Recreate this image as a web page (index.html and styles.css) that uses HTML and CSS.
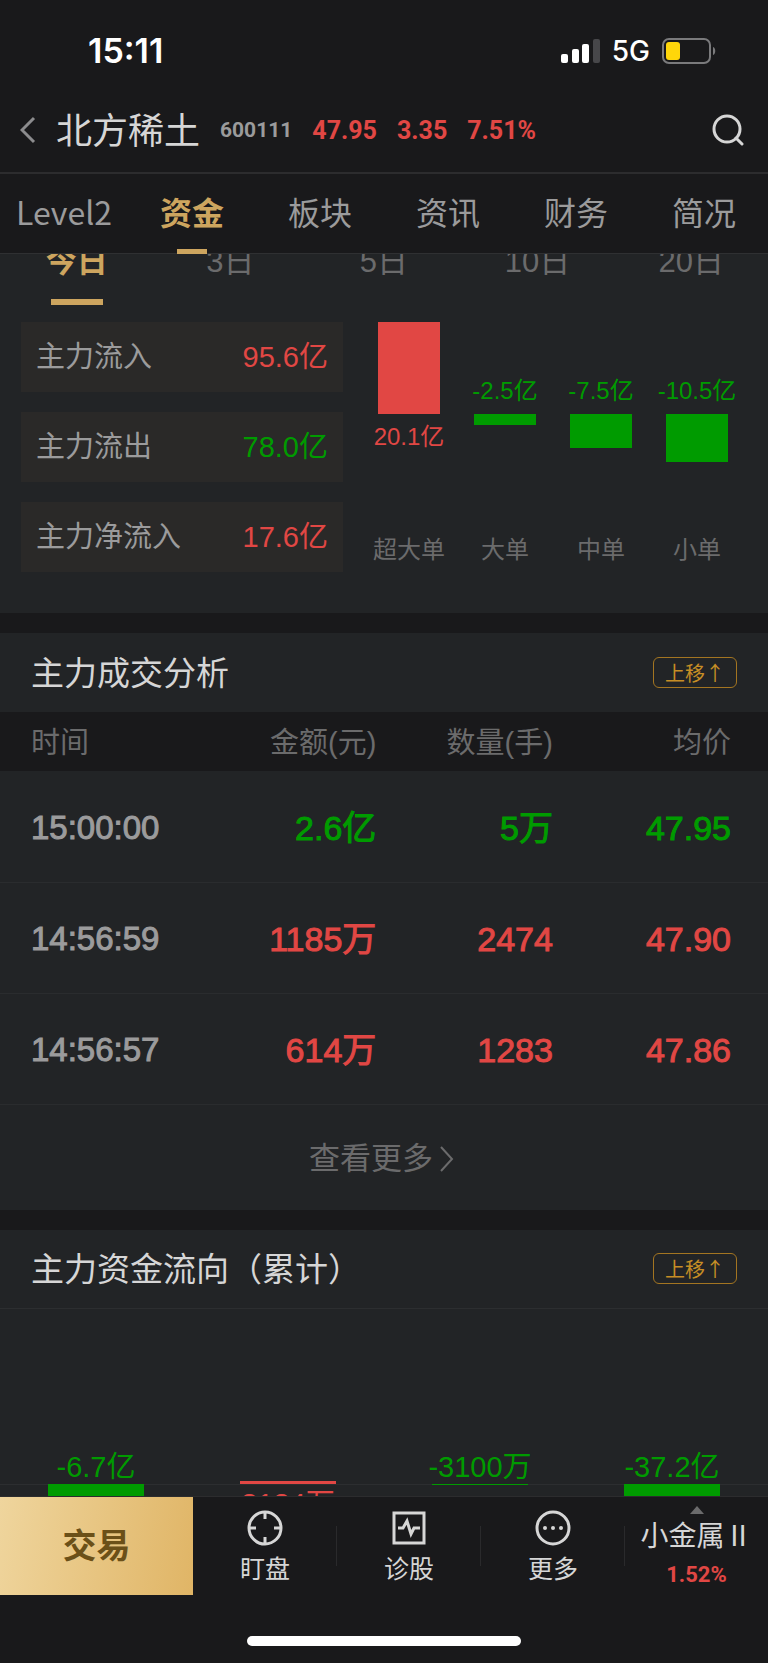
FILE: index.html
```
<!DOCTYPE html>
<html lang="zh-CN">
<head>
	<meta charset="UTF-8">
	<meta name="viewport" content="width=device-width, initial-scale=1">

	<title>北方稀土 600111</title>

	<link rel="stylesheet" href="styles.css">
</head>
<body>

	<div class="statusbar">
		<span class="clock">15:11</span>
		<div class="signal">
			<svg width="39" height="24" viewBox="0 0 39 24">
				<g fill="#fff">
					<rect x="0" y="15" width="7" height="9" rx="2"/>
					<rect x="11" y="10" width="7" height="14" rx="2"/>
					<rect x="21" y="5" width="7" height="19" rx="2"/>
				</g>
				<rect x="32" y="0" width="7" height="24" rx="2" fill="#47474a"/>
			</svg>
			<span class="network">5G</span>
			<svg width="54" height="26" viewBox="0 0 54 26">
				<rect x="1" y="1" width="47" height="24" rx="6" fill="none" stroke="#7a7a7c" stroke-width="2"/>
				<rect x="4" y="4" width="14" height="18" rx="3" fill="#ffd60a"/>
				<path d="M51 9c3 1 3 7 0 8z" fill="#7a7a7c"/>
			</svg>
		</div>
	</div>

	<header class="header">
		<button class="iconbutton" aria-label="返回">
			<svg width="16" height="28" viewBox="0 0 16 28">
				<path d="M14 2L2 14l12 12" fill="none" stroke="#8c8c8e" stroke-width="3"/>
			</svg>
		</button>
		<h1>北方稀土</h1>
		<span class="code">600111</span>
		<div class="quote red">
			<span>47.95</span>
			<span>3.35</span>
			<span>7.51%</span>
		</div>
		<button class="iconbutton search" aria-label="搜索">
			<svg width="32" height="32" viewBox="0 0 32 32">
				<g fill="none" stroke="#d6d6d6" stroke-width="3">
					<circle cx="15" cy="15" r="13"/>
					<path d="M24 24l6 6" stroke-linecap="round"/>
				</g>
			</svg>
		</button>
	</header>

	<nav class="tabs">
		<a href="#level2">Level2</a>
		<a href="#zijin" class="active">资金</a>
		<a href="#bankuai">板块</a>
		<a href="#zixun">资讯</a>
		<a href="#caiwu">财务</a>
		<a href="#jiankuang">简况</a>
	</nav>

	<main class="content">
		<section class="panel">
			<div class="periods">
				<button class="active">今日</button>
				<button>3日</button>
				<button>5日</button>
				<button>10日</button>
				<button>20日</button>
			</div>

			<div class="flow">
				<div class="totals">
					<div class="total"><span>主力流入</span><span class="red">95.6亿</span></div>
					<div class="total"><span>主力流出</span><span class="green">78.0亿</span></div>
					<div class="total"><span>主力净流入</span><span class="red">17.6亿</span></div>
				</div>

				<div class="orders">
					<div class="order red">
						<div class="above"><div class="bar" style="height: 92px"></div></div>
						<div class="below"><span>20.1亿</span></div>
						<span class="name">超大单</span>
					</div>
					<div class="order green">
						<div class="above"><span>-2.5亿</span></div>
						<div class="below"><div class="bar" style="height: 11px"></div></div>
						<span class="name">大单</span>
					</div>
					<div class="order green">
						<div class="above"><span>-7.5亿</span></div>
						<div class="below"><div class="bar" style="height: 34px"></div></div>
						<span class="name">中单</span>
					</div>
					<div class="order green">
						<div class="above"><span>-10.5亿</span></div>
						<div class="below"><div class="bar" style="height: 48px"></div></div>
						<span class="name">小单</span>
					</div>
				</div>
			</div>
		</section>

		<section class="panel">
			<div class="title">
				<h2>主力成交分析</h2>
				<button class="moveup">上移↑</button>
			</div>

			<table class="deals">
				<thead>
					<tr><th>时间</th><th>金额(元)</th><th>数量(手)</th><th>均价</th></tr>
				</thead>
				<tbody>
					<tr class="green"><td>15:00:00</td><td>2.6亿</td><td>5万</td><td>47.95</td></tr>
					<tr class="red"><td>14:56:59</td><td>1185万</td><td>2474</td><td>47.90</td></tr>
					<tr class="red"><td>14:56:57</td><td>614万</td><td>1283</td><td>47.86</td></tr>
				</tbody>
			</table>

			<a href="#more" class="more">
				查看更多
				<svg width="16" height="26" viewBox="0 0 16 26">
					<path d="M2 1l11 12L2 25" fill="none" stroke="#6b6b6c" stroke-width="2"/>
				</svg>
			</a>
		</section>

		<section class="panel">
			<div class="title lined">
				<h2>主力资金流向（累计）</h2>
				<button class="moveup">上移↑</button>
			</div>

			<div class="trend">
				<div class="day green">
					<div class="above"><span>-6.7亿</span></div>
					<div class="below"><div class="bar" style="height: 30px"></div></div>
				</div>
				<div class="day red">
					<div class="above"><div class="bar" style="height: 3px"></div></div>
					<div class="below"><span>3134万</span></div>
				</div>
				<div class="day green">
					<div class="above"><span>-3100万</span></div>
					<div class="below"><div class="bar" style="height: 1px"></div></div>
				</div>
				<div class="day green">
					<div class="above"><span>-37.2亿</span></div>
					<div class="below"><div class="bar" style="height: 160px"></div></div>
				</div>
			</div>
		</section>
	</main>

	<footer class="bottom">
		<div class="actions">
			<button class="trade">交易</button>
			<button class="action">
				<svg width="36" height="36" viewBox="0 0 36 36">
					<g fill="none" stroke="#d6d6d6" stroke-width="3">
						<circle cx="18" cy="18" r="16"/>
						<path d="M18 2v7M18 27v7M2 18h7M27 18h7"/>
					</g>
				</svg>
				盯盘
			</button>
			<button class="action">
				<svg width="36" height="36" viewBox="0 0 36 36">
					<g fill="none" stroke="#d6d6d6" stroke-width="3">
						<rect x="3" y="3" width="30" height="30"/>
						<path d="M7 18h5l4-7 4 13 3-6h6"/>
					</g>
				</svg>
				诊股
			</button>
			<button class="action">
				<svg width="36" height="36" viewBox="0 0 36 36">
					<circle cx="18" cy="18" r="16" fill="none" stroke="#d6d6d6" stroke-width="3"/>
					<g fill="#d6d6d6">
						<circle cx="10" cy="18" r="2"/>
						<circle cx="18" cy="18" r="2"/>
						<circle cx="26" cy="18" r="2"/>
					</g>
				</svg>
				更多
			</button>
			<button class="sector">
				<svg width="14" height="8" viewBox="0 0 14 8">
					<path d="M0 8l7-8 7 8z" fill="#6b6b6c"/>
				</svg>
				<span class="sectorname">小金属Ⅱ</span>
				<span class="change red">1.52%</span>
			</button>
		</div>
		<div class="home"></div>
	</footer>

</body>
</html>
```

FILE: styles.css
```
* {
	box-sizing: border-box;
}

body {
	display: flex;
	flex-direction: column;
	height: 100vh;
	margin: 0;
	background: #19191b;
	color: #9b9b9c;
	font-family: "Liberation Sans", "Noto Sans CJK SC", sans-serif;
	line-height: 1.3;
}

h1, h2 {
	margin: 0;
	padding-top: 4px;
	font-weight: normal;
	color: #d6d6d6;
}

a {
	color: inherit;
	text-decoration: none;
}

button {
	padding: 0;
	border: 0;
	background: none;
	color: inherit;
	font: inherit;
}

svg {
	display: block;
	flex: none;
}

.red {
	color: #e14744;
}

.green {
	color: #009b00;
}

/* status bar */

.statusbar {
	display: flex;
	flex: none;
	justify-content: space-between;
	align-items: center;
	height: 88px;
	padding: 15px 52px 0 88px;
	color: #fff;
	font-family: Inter, sans-serif;
}

.clock {
	font-size: 34px;
	font-weight: 600;
}

.signal {
	display: flex;
	align-items: center;
	gap: 12px;
}

.network {
	font-size: 28px;
	font-weight: 500;
}

/* stock name and price */

.header {
	display: flex;
	flex: none;
	align-items: center;
	height: 86px;
	padding: 0 24px 0 20px;
	border-bottom: 2px solid #2c2c2e;
}

.header h1 {
	margin-left: 20px;
	font-size: 36px;
}

.code, .quote {
	margin-left: 20px;
	padding-top: 2px;
	font-family: Roboto, sans-serif;
	font-weight: bold;
}

.code {
	font-size: 21px;
}

.quote {
	display: flex;
	gap: 20px;
	font-size: 25px;
}

.search {
	margin-left: auto;
}

/* tabs */

.tabs {
	display: grid;
	flex: none;
	grid-template-columns: repeat(6, 1fr);
	height: 80px;
	border-bottom: 1px solid #2f3032;
	font-family: "Noto Sans CJK SC", sans-serif;
	font-size: 32px;
}

.tabs a {
	display: flex;
	flex-direction: column;
	align-items: center;
	line-height: 75px;
}

.tabs .active {
	color: #cda55f;
	font-weight: bold;
}

.tabs .active::after {
	content: "";
	width: 30px;
	height: 6px;
	background: #cda55f;
}

.content {
	flex: 1;
	min-height: 0;
	overflow: hidden;
}

.panel {
	margin-bottom: 20px;
	background: #222426;
}

/* the list is scrolled, so the period row is half under the tabs */

.periods {
	display: grid;
	grid-template-columns: repeat(5, 1fr);
	margin-top: -40px;
	color: #6b6b6c;
	font-size: 31px;
}

.periods button {
	display: flex;
	flex-direction: column;
	align-items: center;
	height: 92px;
	line-height: 96px;
}

.periods .active {
	color: #cda55f;
	font-weight: bold;
}

.periods .active::after {
	content: "";
	width: 52px;
	height: 6px;
	margin-top: -11px;
	background: #cda55f;
}

.flow {
	display: grid;
	grid-template-columns: 322fr 384fr;
	gap: 18px;
	padding: 16px 23px 41px 21px;
}

.totals {
	display: flex;
	flex-direction: column;
	gap: 20px;
	font-size: 29px;
}

.total {
	display: flex;
	justify-content: space-between;
	align-items: center;
	height: 70px;
	padding: 2px 15px 0;
	background: #2a2928;
}

.orders {
	display: grid;
	grid-template-columns: repeat(4, 1fr);
	font-size: 24px;
	line-height: 30px;
}

.order, .day {
	display: flex;
	flex-direction: column;
	align-items: center;
}

.above, .below {
	display: flex;
	flex-direction: column;
	align-items: center;
}

.above {
	justify-content: flex-end;
	height: 92px;
}

.above span {
	margin-bottom: 8px;
}

.below span {
	margin-top: 8px;
}

.bar {
	width: 62px;
	background: currentColor;
}

.name {
	margin: auto 0 7px;
	color: #6b6b6c;
}

/* section titles */

.title {
	display: flex;
	justify-content: space-between;
	align-items: center;
	height: 79px;
	padding: 0 31px;
}

.lined {
	border-bottom: 1px solid #2c2e30;
}

.title h2 {
	font-size: 33px;
}

.moveup {
	width: 84px;
	height: 31px;
	border: 1px solid #a37521;
	border-radius: 6px;
	color: #c68e25;
	font-size: 20px;
	line-height: 28px;
	font-family: "Noto Sans CJK SC", sans-serif;
}

/* deals */

.deals {
	width: 100%;
	border-collapse: collapse;
	table-layout: fixed;
	text-align: right;
}

.deals th {
	width: 23%;
	height: 59px;
	padding: 4px 0 0;
	background: #19191b;
	color: #6b6b6c;
	font-size: 29px;
	font-weight: normal;
}

.deals td {
	height: 111px;
	padding: 4px 0 0;
	border-bottom: 1px solid #2a2c2e;
	font-size: 34px;
	-webkit-text-stroke: 1px;
}

.deals th:first-child, .deals td:first-child {
	width: 26%;
	padding-left: 31px;
	text-align: left;
}

.deals td:first-child {
	color: #9b9b9c;
	font-size: 33px;
}

.deals th:last-child, .deals td:last-child {
	width: 28%;
	padding-right: 37px;
}

.more {
	display: flex;
	justify-content: center;
	align-items: center;
	gap: 6px;
	height: 105px;
	padding: 4px 4px 0 0;
	color: #6b6b6c;
	font-size: 31px;
}

/* accumulated flow */

.trend {
	display: grid;
	grid-template-columns: repeat(4, 1fr);
	font-size: 29px;
	line-height: 34px;
}

.trend .above {
	width: 100%;
	height: 175px;
}

.trend .above span {
	margin-bottom: 0;
}

.trend .below {
	width: 100%;
	border-top: 1px solid #2c2e30;
}

.trend .below span {
	margin-top: 2px;
}

.trend .below .bar {
	margin-top: -1px;
}

.trend .bar {
	width: 50%;
}

/* bottom bar */

.bottom {
	flex: none;
	border-top: 1px solid #2c2c2e;
}

.actions {
	display: grid;
	grid-template-columns: 193fr 144fr 144fr 144fr 143fr;
	height: 98px;
}

.trade {
	background: linear-gradient(100deg, #efd59d, #e0b566);
	color: #6b5018;
	font-size: 34px;
	font-weight: bold;
}

.action, .sector {
	display: flex;
	flex-direction: column;
	align-items: center;
	color: #d6d6d6;
}

.action {
	gap: 5px;
	padding-top: 13px;
	font-size: 25px;
	line-height: 36px;
	background: linear-gradient(#2a2a2c, #2a2a2c) right center / 1px 40px no-repeat;
}

.sector {
	padding-top: 9px;
}

.sectorname {
	font-size: 28px;
	line-height: 46px;
}

.change {
	font-family: Roboto, sans-serif;
	font-size: 22px;
	font-weight: bold;
	line-height: 30px;
}

.home {
	width: 274px;
	height: 10px;
	margin: 41px auto 17px;
	border-radius: 5px;
	background: #fff;
}
```
